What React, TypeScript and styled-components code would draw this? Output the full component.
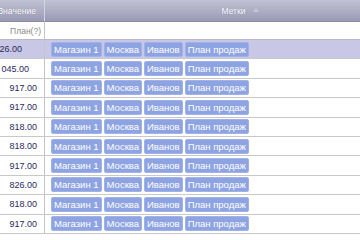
import React from "react";
import styled, { createGlobalStyle } from "styled-components";

const GlobalStyle = createGlobalStyle`
  html, body {
    margin: 0;
    padding: 0;
    background: #ffffff;
    overflow: hidden;
  }
`;

// trail: extra space after the value, some rows carry it in the source grid
const rows = [
  { value: "1 026.00", selected: true, trail: 22 },
  { value: "1 045.00", trail: 15 },
  { value: "917.00" },
  { value: "917.00" },
  { value: "818.00" },
  { value: "818.00" },
  { value: "917.00" },
  { value: "826.00" },
  { value: "818.00" },
  { value: "917.00" },
];

const tags = ["Магазин 1", "Москва", "Иванов", "План продаж"];

export default function App() {
  return (
    <>
      <GlobalStyle />
      <Viewport>
        <Grid>
          <HeadCell>
            <span>Значение</span>
          </HeadCell>
          <HeadCell $center>
            <span>Метки</span>
            <SortArrow />
          </HeadCell>

          <FilterCell>
            <span>План(?)</span>
          </FilterCell>
          <FilterCell />

          {rows.map((row, i) => (
            <React.Fragment key={i}>
              <ValueCell $selected={row.selected} $trail={row.trail ?? 7}>
                <span>{row.value}</span>
              </ValueCell>
              <TagCell $selected={row.selected}>
                {tags.map((t) => (
                  <Tag key={t}>{t}</Tag>
                ))}
              </TagCell>
            </React.Fragment>
          ))}
        </Grid>
      </Viewport>
    </>
  );
}

const Viewport = styled.div`
  width: 360px;
  height: 240px;
  overflow: hidden;
`;

const Grid = styled.div`
  display: grid;
  grid-template-columns: 45px 390px;
  grid-template-rows: 22px 18px;
  grid-auto-rows: 19.4px;
  width: 435px;
  font-family: "Liberation Sans", Arial, sans-serif;
  font-size: 9px;
`;

const Cell = styled.div`
  display: flex;
  align-items: center;
  overflow: hidden;
  white-space: nowrap;
  box-sizing: border-box;
`;

const HeadCell = styled(Cell)<{ $center?: boolean }>`
  justify-content: ${(p) => (p.$center ? "center" : "flex-end")};
  padding: 0 ${(p) => (p.$center ? "0" : "8px")};
  background: linear-gradient(#c2c2d4, #9a9ab6);
  color: #ffffff;
  font-size: 8.6px;
  text-shadow: 0 0 1px rgba(80, 80, 120, 0.5);
  border-right: ${(p) => (p.$center ? "none" : "1px solid #d4d4e0")};
  border-bottom: 1px solid #8a8aa6;
  gap: 7px;
`;

const SortArrow = styled.span`
  width: 0;
  height: 0;
  border-left: 3px solid transparent;
  border-right: 3px solid transparent;
  border-bottom: 4px solid #c6c6d8;
  margin-top: -1px;
`;

const FilterCell = styled(Cell)`
  justify-content: flex-end;
  padding: 0 3px;
  color: #8a8a8a;
  font-size: 8.5px;
  background: #ffffff;
  border-bottom: 1px solid #b8b8c8;
  &:nth-child(odd) {
    border-right: 1px solid #c4c4c4;
  }
`;

const ValueCell = styled(Cell)<{ $selected?: boolean; $trail: number }>`
  justify-content: flex-end;
  padding-right: ${(p) => p.$trail}px;
  color: #2a2a5c;
  background: ${(p) => (p.$selected ? "#c8c8e6" : "#ffffff")};
  border-right: 1px solid #c4c4c4;
  border-bottom: 1px solid #c8c8c8;
`;

const TagCell = styled(Cell)<{ $selected?: boolean }>`
  gap: 2px;
  padding-left: 6px;
  background: ${(p) => (p.$selected ? "#c8c8e6" : "#ffffff")};
  border-bottom: 1px solid #c8c8c8;
`;

const Tag = styled.span`
  display: inline-flex;
  align-items: center;
  height: 13px;
  padding: 0 2px;
  border-radius: 2px;
  background: #8ea4e2;
  border: 1px solid #9fb2ea;
  color: #ffffff;
  font-size: 9.5px;
`;
